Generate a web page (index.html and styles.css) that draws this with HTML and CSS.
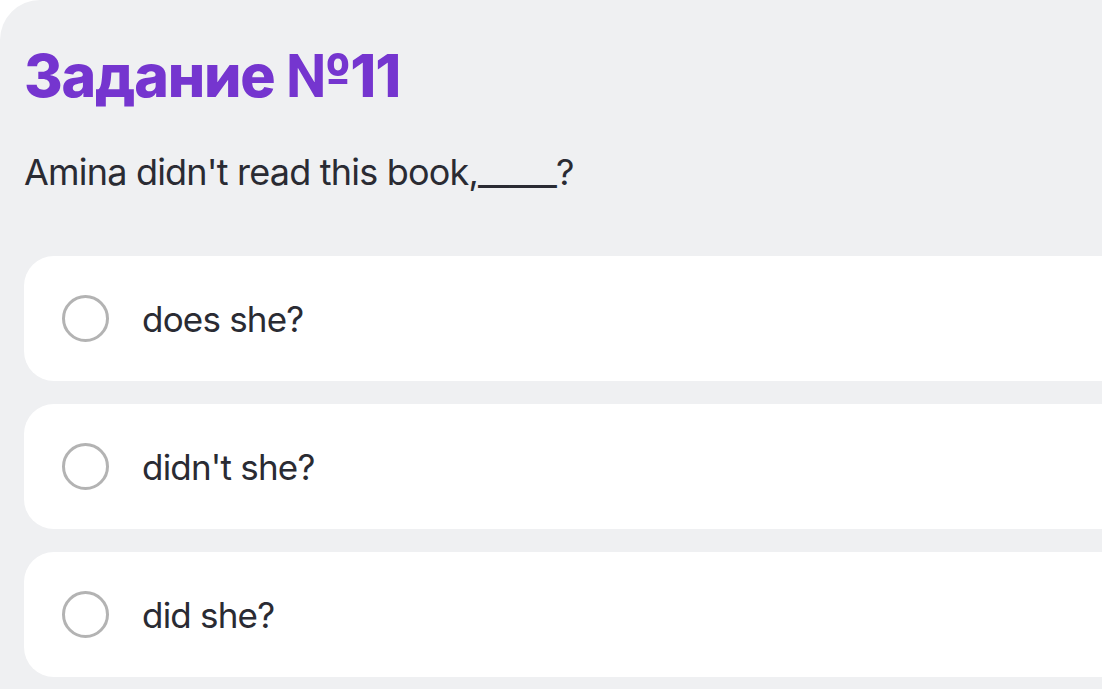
FILE: index.html
```html
<!DOCTYPE html>
<html lang="ru">
<head>
<meta charset="utf-8">
<link rel="stylesheet" href="styles.css">
</head>
<body>
<main class="panel">
  <h1 class="title">Задание №11</h1>
  <p class="question">Amina didn't read this book,_____?</p>
  <div class="options">
    <label class="option"><span class="radio"></span><span class="label">does she?</span></label>
    <label class="option"><span class="radio"></span><span class="label">didn't she?</span></label>
    <label class="option"><span class="radio"></span><span class="label">did she?</span></label>
  </div>
</main>
</body>
</html>
```

FILE: styles.css
```css
html, body {
  margin: 0;
  padding: 0;
  background: #ffffff;
  overflow: hidden;
}
body {
  width: 1102px;
  height: 689px;
}
.panel {
  background: #eff0f2;
  border-top-left-radius: 40px;
  width: 1140px;
  height: 720px;
  padding: 36px 0 0 24px;
  box-sizing: border-box;
  font-family: Inter, "Noto Sans", sans-serif;
}
.title {
  margin: 0;
  font-size: 59px;
  line-height: 80px;
  font-weight: 800;
  color: #7535cf;
  letter-spacing: -1.2px;
}
.question {
  margin: 34px 0 0 0;
  font-size: 36px;
  line-height: 44px;
  font-weight: 400;
  color: #2a2b33;
  letter-spacing: -0.8px;
}
.options {
  margin-top: 62px;
  display: flex;
  flex-direction: column;
  gap: 23px;
}
.option {
  display: flex;
  align-items: center;
  height: 125px;
  background: #ffffff;
  border-radius: 30px 0 0 30px;
  padding-left: 38px;
  box-sizing: border-box;
}
.radio {
  width: 47px;
  height: 47px;
  border: 3.5px solid #b3b3b3;
  border-radius: 50%;
  box-sizing: border-box;
  flex: none;
}
.label {
  margin-left: 33px;
  font-size: 35px;
  color: #2a2b33;
  letter-spacing: -0.8px;
}
```
